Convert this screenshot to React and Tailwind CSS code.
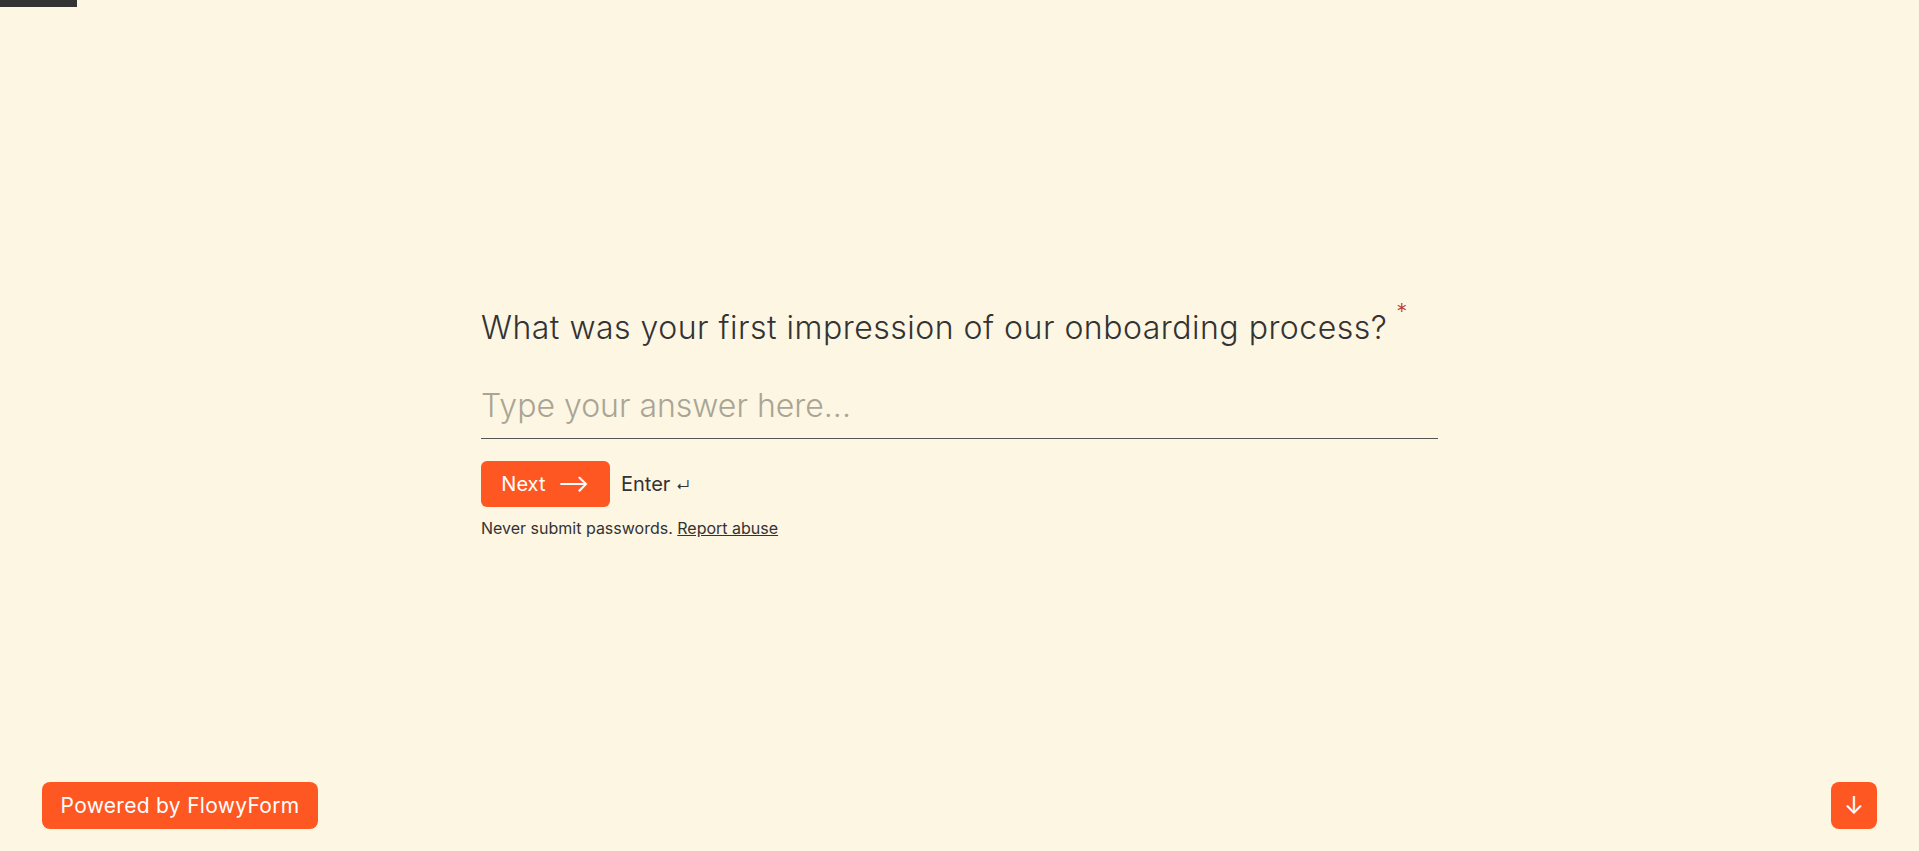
import React from 'react';

/**
 * Single-question form screen with a text answer, Next button and
 * the floating footer controls.
 */
export default function App() {
  const font = { fontFamily: 'Inter, "Noto Sans", sans-serif' };

  return (
    <div className="relative min-h-screen bg-[#fdf6e3] text-[#333333]" style={font}>
      {/* Progress bar */}
      <div className="absolute left-0 top-0 h-[7px] w-[77px] bg-[#333333]" />

      <main className="flex min-h-screen items-center justify-center">
        <div className="w-[957px] pb-[4px]">
          {/* Question */}
          <h1 className="text-[32px] font-light leading-[40px] tracking-[0.5px] text-[#333333]">
            What was your first impression of our onboarding process?
            <span className="relative -top-[20px] ml-[9px] text-[22px] text-[#c0392b]">*</span>
          </h1>

          {/* Answer input */}
          <input
            type="text"
            placeholder="Type your answer here..."
            className="mt-[35px] w-full border-b border-[#555555] bg-transparent pb-[12px] text-[32px] font-light leading-[40px] text-[#333333] placeholder:text-[#a9a595] focus:outline-none"
          />

          {/* Actions */}
          <div className="mt-[22px] flex items-center gap-[11px]">
            <button className="flex h-[46px] w-[129px] items-center justify-center gap-[12px] rounded-[6px] bg-[#ff5722] text-[20px] text-white">
              <span>Next</span>
              <span className="text-[24px] leading-none">⟶</span>
            </button>
            <span className="text-[20px] text-[#333333]">
              Enter <span className="text-[14px]">↵</span>
            </span>
          </div>

          <p className="mt-[9px] text-[16px] text-[#333333]">
            Never submit passwords. <a href="#" className="underline">Report abuse</a>
          </p>
        </div>
      </main>

      {/* Footer controls */}
      <a
        href="#"
        className="fixed bottom-[22px] left-[42px] flex h-[47px] w-[276px] items-center justify-center rounded-[8px] bg-[#ff5722] text-[21px] tracking-[0.3px] text-white"
      >
        Powered by FlowyForm
      </a>
      <button className="fixed bottom-[22px] right-[42px] flex h-[47px] w-[46px] items-center justify-center rounded-[8px] bg-[#ff5722] text-[24px] text-white">
        ↓
      </button>
    </div>
  );
}
